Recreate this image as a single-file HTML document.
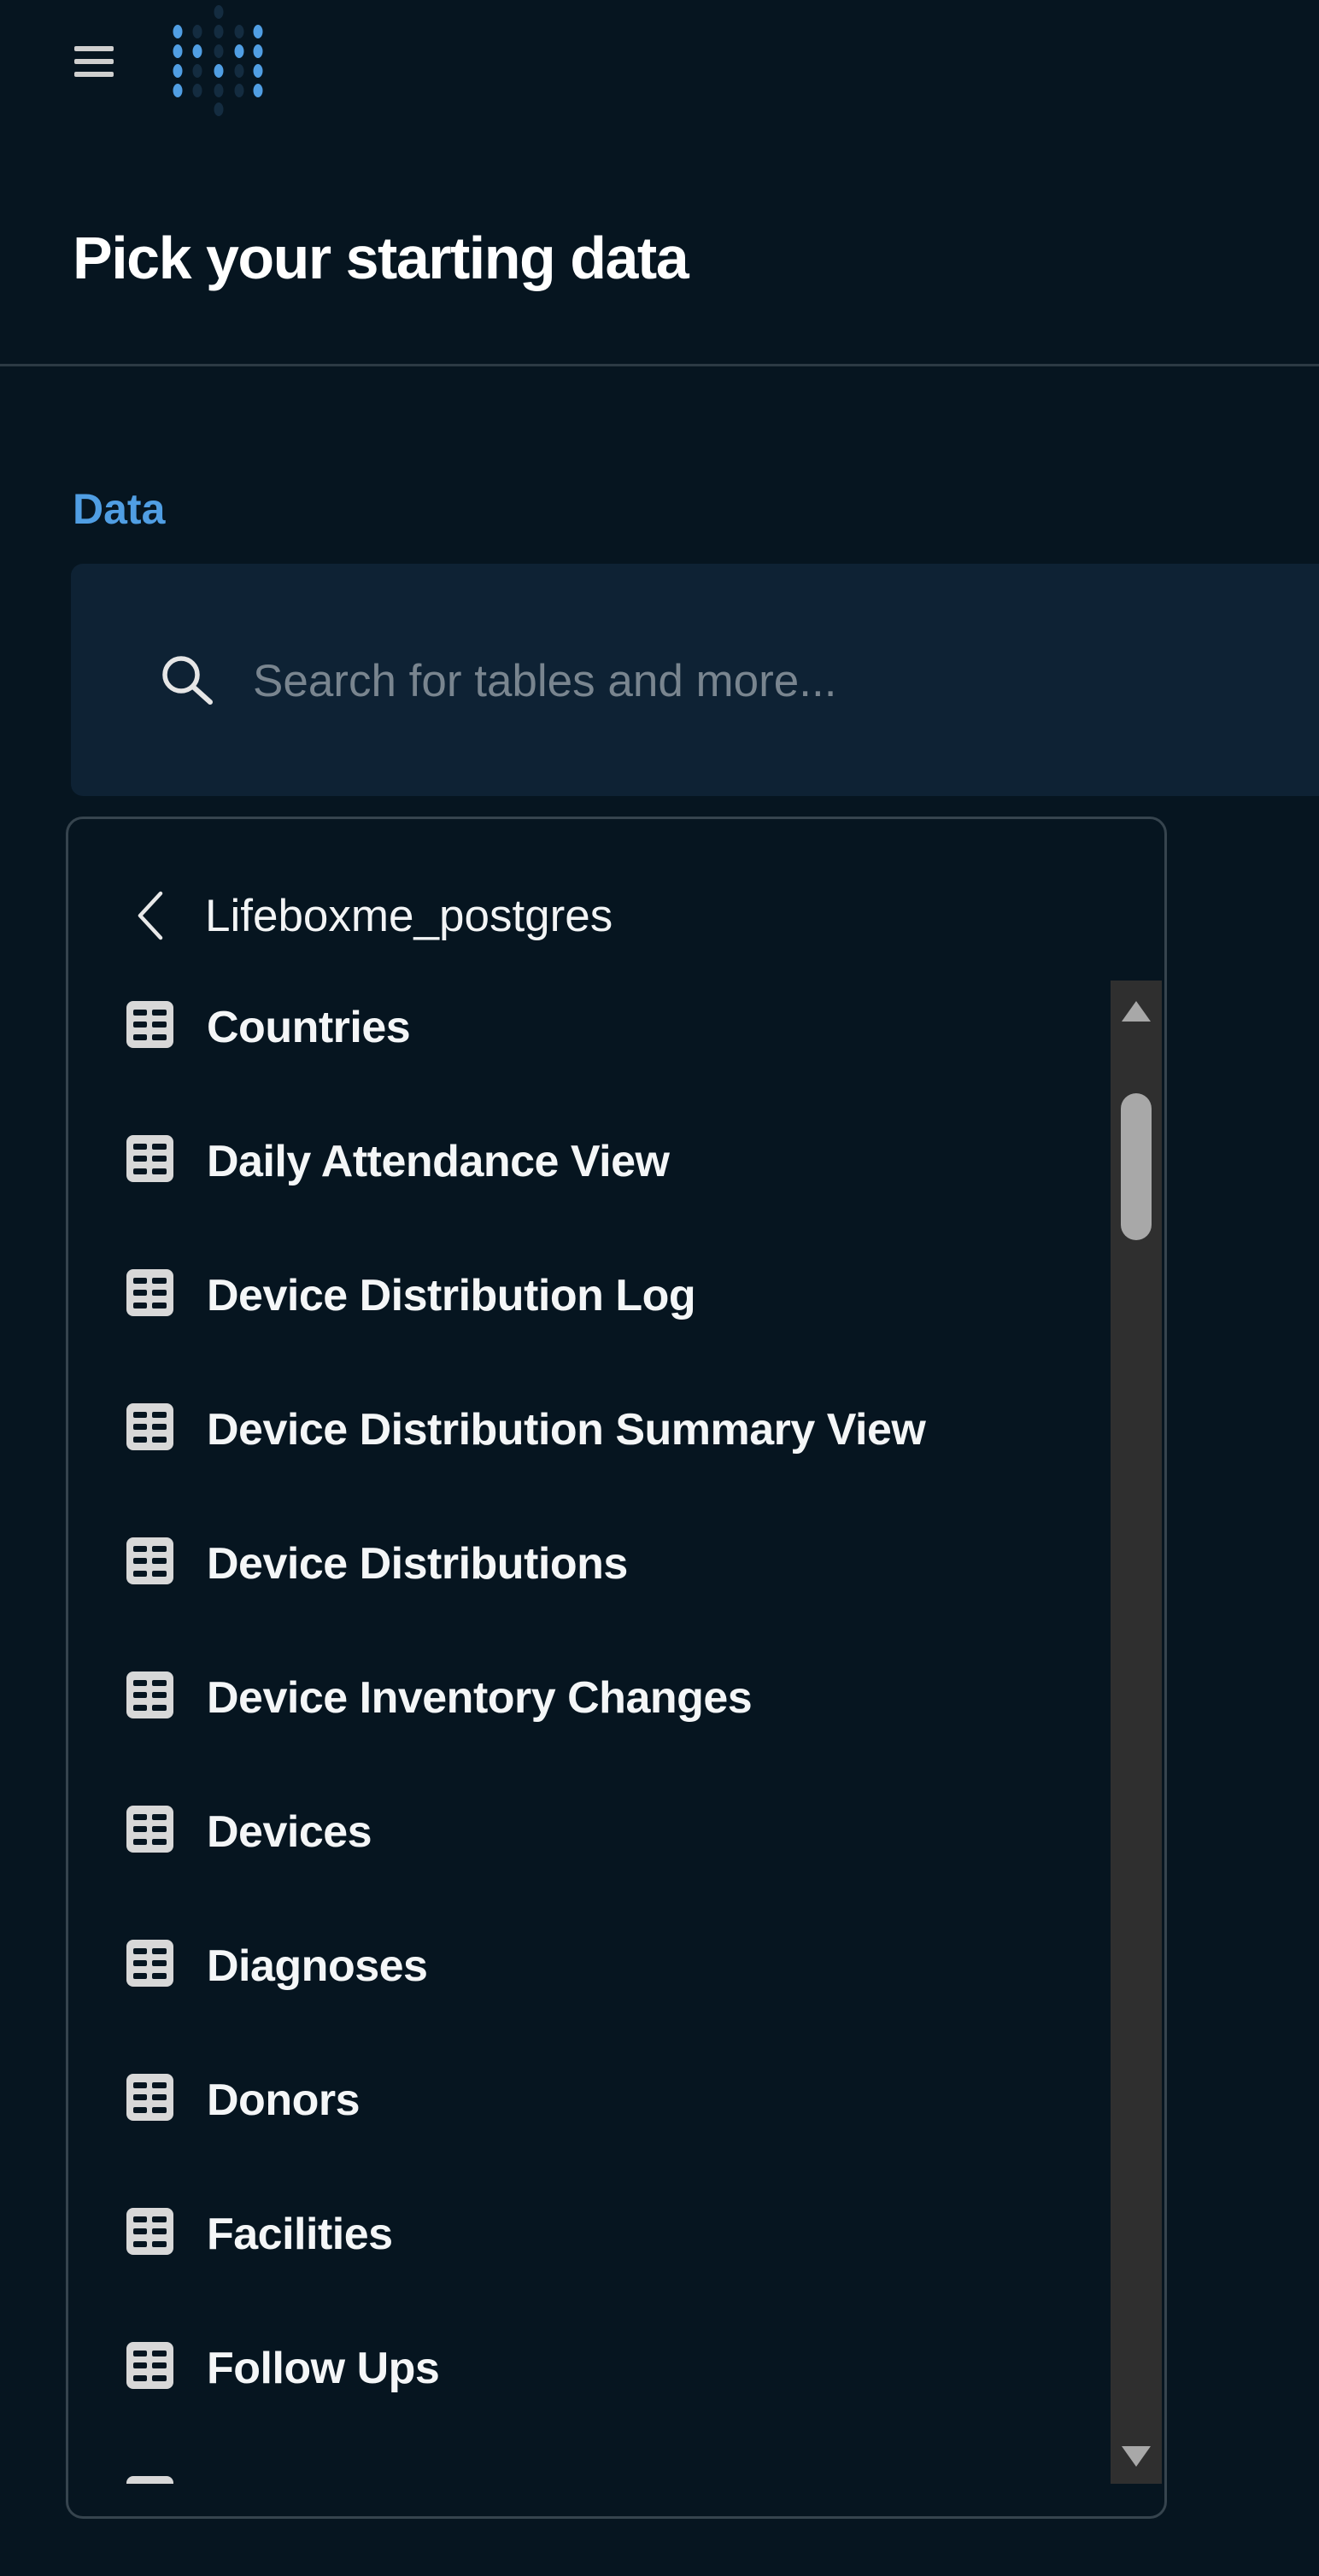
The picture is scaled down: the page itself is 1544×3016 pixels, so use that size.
<!DOCTYPE html>
<html><head><meta charset="utf-8"><style>
html,body{margin:0;padding:0;}
body{width:1544px;height:3016px;background:#061520;position:relative;overflow:hidden;font-family:"Liberation Sans",sans-serif;color:#fff;}
.a{position:absolute;}
.title{left:85px;top:262px;font-size:70px;font-weight:700;letter-spacing:-1.5px;white-space:nowrap;line-height:80px;}
.hr{left:0;top:426px;width:1544px;height:3px;background:#2c3a44;}
.data{left:85px;top:566px;font-size:50px;font-weight:700;color:#509ee3;line-height:60px;}
.search{left:83px;top:660px;width:1500px;height:272px;background:#0e2234;border-radius:14px;}
.ph{left:296px;top:768px;font-size:53px;color:#79858f;white-space:nowrap;line-height:60px;}
.panel{left:77px;top:956px;width:1283px;height:1987px;border:3px solid #36444e;border-radius:20px;box-sizing:content-box;}
.back{left:240px;top:1042px;font-size:53px;line-height:62px;white-space:nowrap;color:#f2f4f5;}
.list{left:80px;top:1148px;width:1220px;height:1760px;overflow:hidden;}
.row{position:absolute;left:0;height:60px;}
.row .ic{position:absolute;left:68px;top:0;width:55px;height:55px;}
.row .t{position:absolute;left:162px;top:0;font-size:52px;font-weight:700;letter-spacing:-0.5px;line-height:62px;white-space:nowrap;color:#f4f6f7;}
.sb{left:1300px;top:1148px;width:60px;height:1760px;background:#2f2f2f;}
</style></head><body>
<svg class="a" style="left:0;top:0" width="400" height="150">
<g fill="#cfcfcf"><rect x="87" y="54" width="46" height="6" rx="2"/><rect x="87" y="69" width="46" height="6" rx="2"/><rect x="87" y="84" width="46" height="6" rx="2"/></g>
<g fill="#142c40">
<ellipse cx="256" cy="14" rx="5.5" ry="8"/><ellipse cx="256" cy="128" rx="5.5" ry="8"/>
<ellipse cx="231" cy="37" rx="5.5" ry="8"/><ellipse cx="256" cy="37" rx="5.5" ry="8"/><ellipse cx="280" cy="37" rx="5.5" ry="8"/>
<ellipse cx="256" cy="60" rx="5.5" ry="8"/>
<ellipse cx="231" cy="83" rx="5.5" ry="8"/><ellipse cx="280" cy="83" rx="5.5" ry="8"/>
<ellipse cx="231" cy="106" rx="5.5" ry="8"/><ellipse cx="256" cy="106" rx="5.5" ry="8"/><ellipse cx="280" cy="106" rx="5.5" ry="8"/>
</g>
<g fill="#509ee3">
<ellipse cx="208" cy="37" rx="5.5" ry="8"/><ellipse cx="302" cy="37" rx="5.5" ry="8"/>
<ellipse cx="208" cy="60" rx="5.5" ry="8"/><ellipse cx="231" cy="60" rx="5.5" ry="8"/><ellipse cx="280" cy="60" rx="5.5" ry="8"/><ellipse cx="302" cy="60" rx="5.5" ry="8"/>
<ellipse cx="208" cy="83" rx="5.5" ry="8"/><ellipse cx="256" cy="83" rx="5.5" ry="8"/><ellipse cx="302" cy="83" rx="5.5" ry="8"/>
<ellipse cx="208" cy="106" rx="5.5" ry="8"/><ellipse cx="302" cy="106" rx="5.5" ry="8"/>
</g></svg>
<div class="a title">Pick your starting data</div>
<div class="a hr"></div>
<div class="a data">Data</div>
<div class="a search"></div>
<svg class="a" style="left:180px;top:760px" width="80" height="80"><circle cx="32" cy="30" r="19" fill="none" stroke="#e6e6e6" stroke-width="5.5"/><line x1="46" y1="44" x2="66" y2="62" stroke="#e6e6e6" stroke-width="6" stroke-linecap="round"/></svg>
<div class="a ph">Search for tables and more...</div>
<div class="a panel"></div>
<svg class="a" style="left:150px;top:1040px" width="50" height="64"><polyline points="38,6 14,32 38,58" fill="none" stroke="#e8e8e8" stroke-width="4.5" stroke-linecap="round" stroke-linejoin="round"/></svg>
<div class="a back">Lifeboxme_postgres</div>
<div class="a list">
<div class="row" style="top:24px"><svg class="ic" viewBox="0 0 55 55"><rect x="0" y="0" width="55" height="55" rx="8" fill="#d8d8d8"/><g fill="#061520"><rect x="8" y="10" width="16" height="7" rx="2"/><rect x="30" y="10" width="17" height="7" rx="2"/><rect x="8" y="24" width="16" height="7" rx="2"/><rect x="30" y="24" width="17" height="7" rx="2"/><rect x="8" y="39" width="16" height="7" rx="2"/><rect x="30" y="39" width="17" height="7" rx="2"/></g></svg><div class="t">Countries</div></div>
<div class="row" style="top:181px"><svg class="ic" viewBox="0 0 55 55"><rect width="55" height="55" rx="8" fill="#d8d8d8"/><g fill="#061520"><rect x="8" y="10" width="16" height="7" rx="2"/><rect x="30" y="10" width="17" height="7" rx="2"/><rect x="8" y="24" width="16" height="7" rx="2"/><rect x="30" y="24" width="17" height="7" rx="2"/><rect x="8" y="39" width="16" height="7" rx="2"/><rect x="30" y="39" width="17" height="7" rx="2"/></g></svg><div class="t">Daily Attendance View</div></div>
<div class="row" style="top:338px"><svg class="ic" viewBox="0 0 55 55"><rect width="55" height="55" rx="8" fill="#d8d8d8"/><g fill="#061520"><rect x="8" y="10" width="16" height="7" rx="2"/><rect x="30" y="10" width="17" height="7" rx="2"/><rect x="8" y="24" width="16" height="7" rx="2"/><rect x="30" y="24" width="17" height="7" rx="2"/><rect x="8" y="39" width="16" height="7" rx="2"/><rect x="30" y="39" width="17" height="7" rx="2"/></g></svg><div class="t">Device Distribution Log</div></div>
<div class="row" style="top:495px"><svg class="ic" viewBox="0 0 55 55"><rect width="55" height="55" rx="8" fill="#d8d8d8"/><g fill="#061520"><rect x="8" y="10" width="16" height="7" rx="2"/><rect x="30" y="10" width="17" height="7" rx="2"/><rect x="8" y="24" width="16" height="7" rx="2"/><rect x="30" y="24" width="17" height="7" rx="2"/><rect x="8" y="39" width="16" height="7" rx="2"/><rect x="30" y="39" width="17" height="7" rx="2"/></g></svg><div class="t">Device Distribution Summary View</div></div>
<div class="row" style="top:652px"><svg class="ic" viewBox="0 0 55 55"><rect width="55" height="55" rx="8" fill="#d8d8d8"/><g fill="#061520"><rect x="8" y="10" width="16" height="7" rx="2"/><rect x="30" y="10" width="17" height="7" rx="2"/><rect x="8" y="24" width="16" height="7" rx="2"/><rect x="30" y="24" width="17" height="7" rx="2"/><rect x="8" y="39" width="16" height="7" rx="2"/><rect x="30" y="39" width="17" height="7" rx="2"/></g></svg><div class="t">Device Distributions</div></div>
<div class="row" style="top:809px"><svg class="ic" viewBox="0 0 55 55"><rect width="55" height="55" rx="8" fill="#d8d8d8"/><g fill="#061520"><rect x="8" y="10" width="16" height="7" rx="2"/><rect x="30" y="10" width="17" height="7" rx="2"/><rect x="8" y="24" width="16" height="7" rx="2"/><rect x="30" y="24" width="17" height="7" rx="2"/><rect x="8" y="39" width="16" height="7" rx="2"/><rect x="30" y="39" width="17" height="7" rx="2"/></g></svg><div class="t">Device Inventory Changes</div></div>
<div class="row" style="top:966px"><svg class="ic" viewBox="0 0 55 55"><rect width="55" height="55" rx="8" fill="#d8d8d8"/><g fill="#061520"><rect x="8" y="10" width="16" height="7" rx="2"/><rect x="30" y="10" width="17" height="7" rx="2"/><rect x="8" y="24" width="16" height="7" rx="2"/><rect x="30" y="24" width="17" height="7" rx="2"/><rect x="8" y="39" width="16" height="7" rx="2"/><rect x="30" y="39" width="17" height="7" rx="2"/></g></svg><div class="t">Devices</div></div>
<div class="row" style="top:1123px"><svg class="ic" viewBox="0 0 55 55"><rect width="55" height="55" rx="8" fill="#d8d8d8"/><g fill="#061520"><rect x="8" y="10" width="16" height="7" rx="2"/><rect x="30" y="10" width="17" height="7" rx="2"/><rect x="8" y="24" width="16" height="7" rx="2"/><rect x="30" y="24" width="17" height="7" rx="2"/><rect x="8" y="39" width="16" height="7" rx="2"/><rect x="30" y="39" width="17" height="7" rx="2"/></g></svg><div class="t">Diagnoses</div></div>
<div class="row" style="top:1280px"><svg class="ic" viewBox="0 0 55 55"><rect width="55" height="55" rx="8" fill="#d8d8d8"/><g fill="#061520"><rect x="8" y="10" width="16" height="7" rx="2"/><rect x="30" y="10" width="17" height="7" rx="2"/><rect x="8" y="24" width="16" height="7" rx="2"/><rect x="30" y="24" width="17" height="7" rx="2"/><rect x="8" y="39" width="16" height="7" rx="2"/><rect x="30" y="39" width="17" height="7" rx="2"/></g></svg><div class="t">Donors</div></div>
<div class="row" style="top:1437px"><svg class="ic" viewBox="0 0 55 55"><rect width="55" height="55" rx="8" fill="#d8d8d8"/><g fill="#061520"><rect x="8" y="10" width="16" height="7" rx="2"/><rect x="30" y="10" width="17" height="7" rx="2"/><rect x="8" y="24" width="16" height="7" rx="2"/><rect x="30" y="24" width="17" height="7" rx="2"/><rect x="8" y="39" width="16" height="7" rx="2"/><rect x="30" y="39" width="17" height="7" rx="2"/></g></svg><div class="t">Facilities</div></div>
<div class="row" style="top:1594px"><svg class="ic" viewBox="0 0 55 55"><rect width="55" height="55" rx="8" fill="#d8d8d8"/><g fill="#061520"><rect x="8" y="10" width="16" height="7" rx="2"/><rect x="30" y="10" width="17" height="7" rx="2"/><rect x="8" y="24" width="16" height="7" rx="2"/><rect x="30" y="24" width="17" height="7" rx="2"/><rect x="8" y="39" width="16" height="7" rx="2"/><rect x="30" y="39" width="17" height="7" rx="2"/></g></svg><div class="t">Follow Ups</div></div>
<div class="row" style="top:1751px"><svg class="ic" viewBox="0 0 55 55"><rect width="55" height="55" rx="8" fill="#d8d8d8"/><g fill="#061520"><rect x="8" y="10" width="16" height="7" rx="2"/><rect x="30" y="10" width="17" height="7" rx="2"/></g></svg><div class="t">Inventory</div></div>
</div>
<div class="a sb"></div>
<svg class="a" style="left:1300px;top:1148px" width="60" height="1760">
<polygon points="30,24 47,48 13,48" fill="#a8a8a8"/>
<rect x="12" y="132" width="36" height="172" rx="18" fill="#a8a8a8"/>
<polygon points="13,1716 47,1716 30,1740" fill="#a8a8a8"/>
</svg>
</body></html>
